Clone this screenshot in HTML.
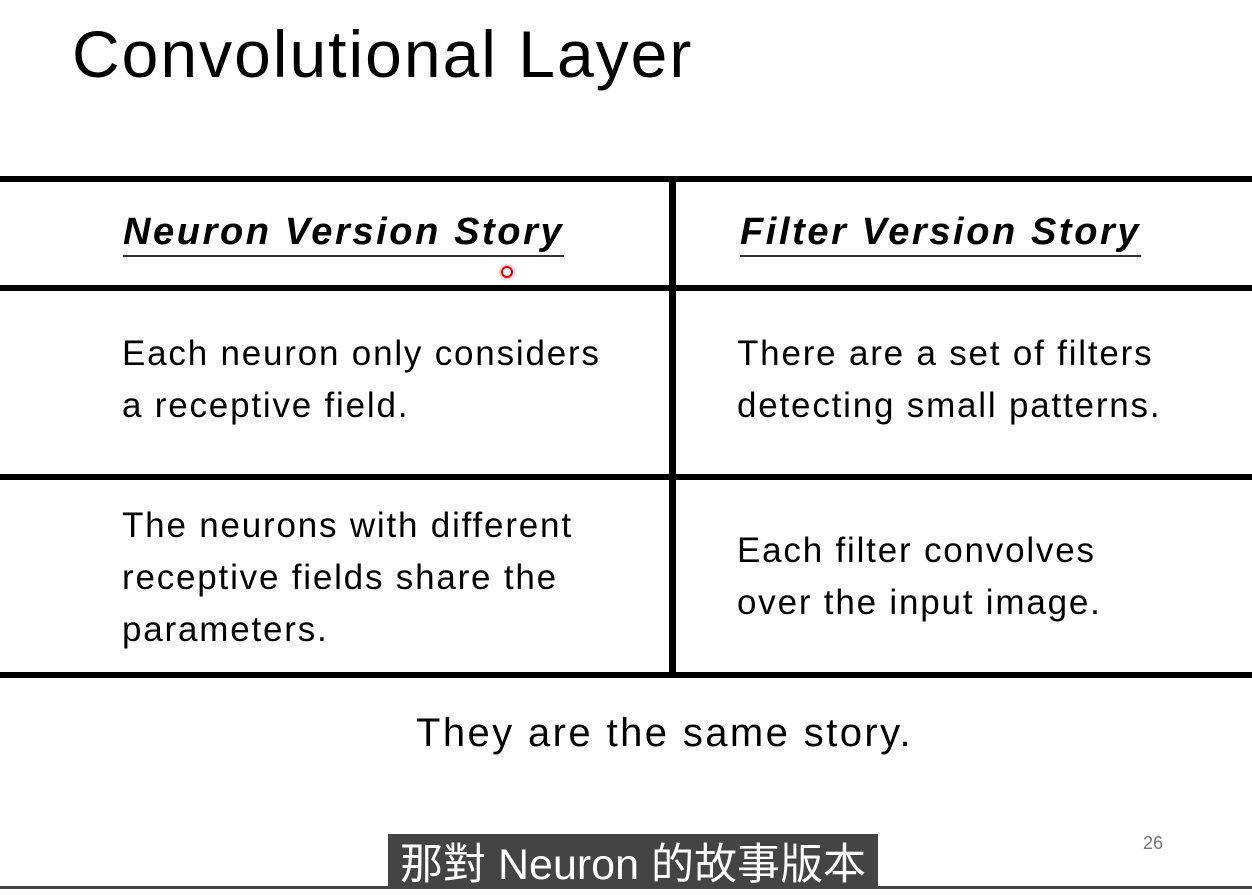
<!DOCTYPE html>
<html><head><meta charset="utf-8"><style>
body{margin:0;width:1252px;height:889px;background:#fff;position:relative;overflow:hidden;font-family:"Liberation Sans",sans-serif;color:#000}
.a{position:absolute;white-space:nowrap}
.h{position:absolute;left:0;width:1252px;height:6px;background:#000}
.t{font-size:35px;letter-spacing:1.8px}
.hd{font-size:38px;font-weight:bold;font-style:italic;letter-spacing:2.6px;border-bottom:2px solid #333;line-height:46px}
</style></head><body>
<div class="a" style="left:72px;top:16px;font-size:66px;letter-spacing:2px">Convolutional Layer</div>
<div class="h" style="top:176px"></div>
<div class="h" style="top:285px"></div>
<div class="h" style="top:474px"></div>
<div class="h" style="top:672px"></div>
<div class="a" style="left:669px;top:180px;width:7px;height:494px;background:#000"></div>
<div class="a hd" style="left:123px;top:209px">Neuron Version Story</div>
<div class="a hd" style="left:740px;top:209px">Filter Version Story</div>
<div class="a" style="left:501px;top:266px;width:8px;height:8px;border:2px solid #e00;border-radius:50%;box-shadow:0 0 4px #f66"></div>
<div class="a t" style="left:122px;top:328px;line-height:52px">Each neuron only considers<br>a receptive field.</div>
<div class="a t" style="left:737px;top:328px;line-height:52px">There are a set of filters<br>detecting small patterns.</div>
<div class="a t" style="left:122px;top:500px;line-height:52px">The neurons with different<br>receptive fields share the<br>parameters.</div>
<div class="a t" style="left:737px;top:525px;line-height:52px">Each filter convolves<br>over the input image.</div>
<div class="a" style="left:416px;top:711px;font-size:40px;letter-spacing:2.4px">They are the same story.</div>
<div class="a" style="left:1143px;top:833px;font-size:18px;color:#777">26</div>
<div class="a" style="left:0;top:886px;width:1252px;height:3px;background:#444"></div>
<div class="a" style="left:388px;top:834px;width:490px;height:55px;background:#444;color:#fff;font-size:43px;line-height:62px;text-align:center;font-family:'Liberation Sans','Noto Sans CJK TC',sans-serif">那對 Neuron 的故事版本</div>
</body></html>
